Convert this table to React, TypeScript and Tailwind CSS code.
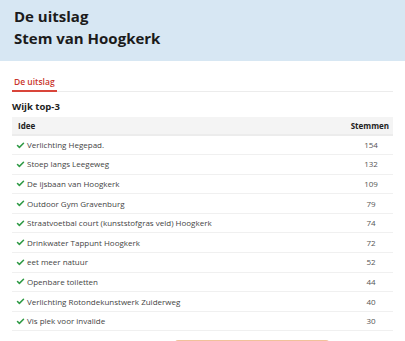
import { Check } from "lucide-react";

const rows = [
  { idee: "Verlichting Hegepad.", stemmen: 154 },
  { idee: "Stoep langs Leegeweg", stemmen: 132 },
  { idee: "De ijsbaan van Hoogkerk", stemmen: 109 },
  { idee: "Outdoor Gym Gravenburg", stemmen: 79 },
  { idee: "Straatvoetbal court (kunststofgras veld) Hoogkerk", stemmen: 74 },
  { idee: "Drinkwater Tappunt Hoogkerk", stemmen: 72 },
  { idee: "eet meer natuur", stemmen: 52 },
  { idee: "Openbare toiletten", stemmen: 44 },
  { idee: "Verlichting Rotondekunstwerk Zuiderweg", stemmen: 40 },
  { idee: "Vis plek voor invalide", stemmen: 30 },
];

export default function App() {
  return (
    <div className="w-[405px] h-[341px] overflow-hidden bg-white font-['Open_Sans',sans-serif] text-[#222]">
      {/* Header */}
      <div className="h-[61px] bg-[#d7e7f3] px-[14px] pt-[5px]">
        <h1 className="text-[15px] font-bold leading-[22px] text-[#1b1b1b]">
          De uitslag
          <br />
          Stem van Hoogkerk
        </h1>
      </div>

      <div className="px-[12px]">
        {/* Tabs */}
        <div className="mt-[15px] border-b border-[#ececec] flex">
          <div className="px-[2px] pb-[2px] border-b-2 border-[#d9453a] text-[8.5px] font-semibold text-[#c9352b] leading-[12px] -mb-px">
            De uitslag
          </div>
        </div>

        <h2 className="mt-[9px] text-[9.5px] font-bold leading-[12px] text-[#222]">Wijk top-3</h2>

        <table className="mt-[4px] w-full border-collapse">
          <thead>
            <tr className="bg-[#f4f4f4] border-b-2 border-[#ececec]">
              <th className="h-[18px] pl-[6px] text-left text-[8px] font-bold text-[#222]">Idee</th>
              <th className="h-[18px] pr-[4px] text-right text-[8px] font-bold text-[#222] w-[60px]">Stemmen</th>
            </tr>
          </thead>
          <tbody>
            {rows.map((r) => (
              <tr key={r.idee} className="border-b border-[#f0f0f0]">
                <td className="h-[19.6px] pl-[4px] text-[8px] text-[#444]">
                  <span className="flex items-center gap-[2px]">
                    <Check className="w-[9px] h-[9px] text-[#2f9a45]" strokeWidth={4} />
                    {r.idee}
                  </span>
                </td>
                <td className="h-[19.6px] pl-[16px] text-center text-[8px] text-[#555]">{r.stemmen}</td>
              </tr>
            ))}
          </tbody>
        </table>

        <div className="ml-[163px] mt-[9px] w-[154px] h-[8px] rounded-t-[3px] border-t border-x border-[#f1c29a] bg-[#fdf6ef]" />
      </div>
    </div>
  );
}
